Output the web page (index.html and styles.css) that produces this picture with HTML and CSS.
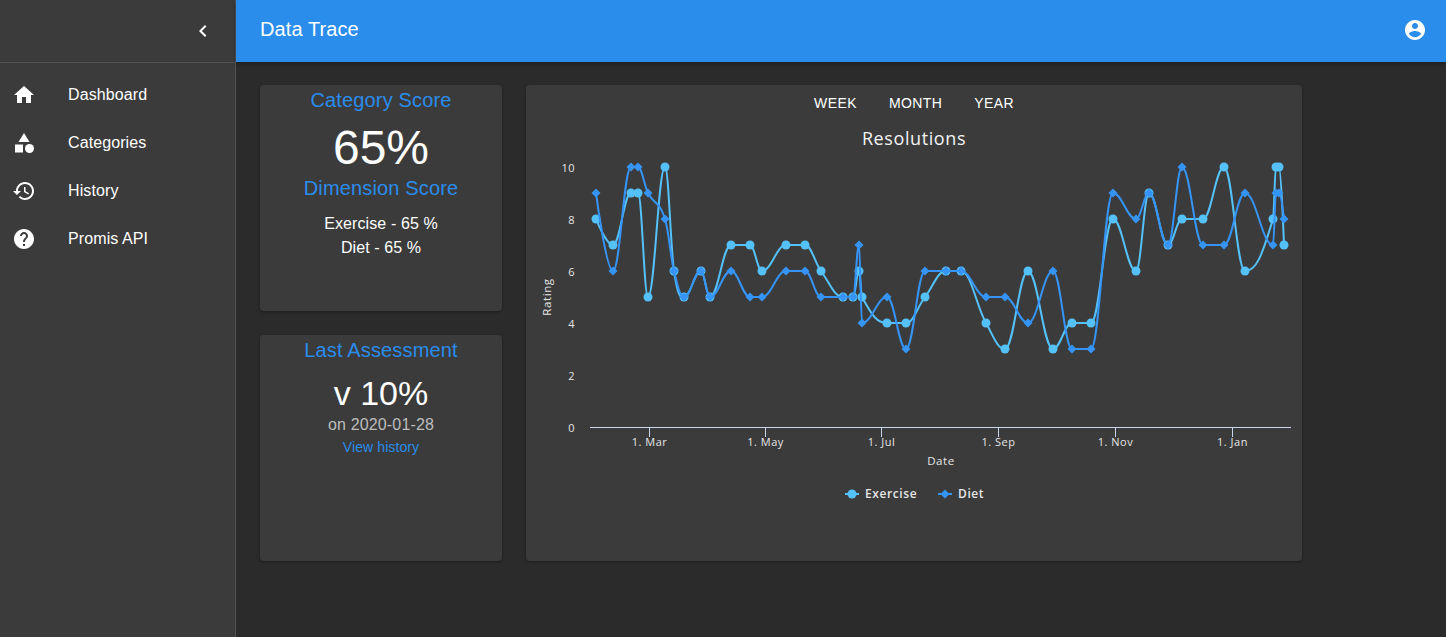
FILE: index.html
```html
<!DOCTYPE html>
<html lang="en">

<head>
    <meta charset="UTF-8">
    <meta name="viewport" content="width=device-width, initial-scale=1.0">
    <title>Data Trace</title>
    <link rel="stylesheet" href="styles.css">
</head>

<body>
    <aside class="drawer">
        <div class="drawer-head">
            <svg class="icon" viewBox="0 0 24 24"><path d="M15.41 7.41L14 6l-6 6 6 6 1.41-1.41L10.83 12z"/></svg>
        </div>
        <nav class="nav">
            <a class="nav-item">
                <svg class="icon" viewBox="0 0 24 24"><path d="M10 20v-6h4v6h5v-8h3L12 3 2 12h3v8z"/></svg>
                <span>Dashboard</span>
            </a>
            <a class="nav-item">
                <svg class="icon" viewBox="0 0 24 24"><path d="M12 2l-5.5 9h11z"/><circle cx="17.5" cy="17.5" r="4.5"/><path d="M3 13.5h8v8H3z"/></svg>
                <span>Categories</span>
            </a>
            <a class="nav-item">
                <svg class="icon" viewBox="0 0 24 24"><path d="M13 3c-4.97 0-9 4.03-9 9H1l3.89 3.89.07.14L9 12H6c0-3.87 3.13-7 7-7s7 3.13 7 7-3.13 7-7 7c-1.93 0-3.68-.79-4.94-2.06l-1.42 1.42C8.27 19.99 10.51 21 13 21c4.97 0 9-4.03 9-9s-4.03-9-9-9zm-1 5v5l4.28 2.54.72-1.21-3.5-2.08V8H12z"/></svg>
                <span>History</span>
            </a>
            <a class="nav-item">
                <svg class="icon" viewBox="0 0 24 24"><path d="M12 2C6.48 2 2 6.48 2 12s4.48 10 10 10 10-4.48 10-10S17.52 2 12 2zm1 17h-2v-2h2v2zm2.07-7.75l-.9.92C13.45 12.9 13 13.5 13 15h-2v-.5c0-1.1.45-2.1 1.17-2.83l1.24-1.26c.37-.36.59-.86.59-1.41 0-1.1-.9-2-2-2s-2 .9-2 2H8c0-2.21 1.79-4 4-4s4 1.79 4 4c0 .88-.36 1.68-.93 2.25z"/></svg>
                <span>Promis API</span>
            </a>
        </nav>
    </aside>

    <div class="page">
        <header class="topbar">
            <h1>Data Trace</h1>
            <svg class="icon" viewBox="0 0 24 24"><path d="M12 2C6.48 2 2 6.48 2 12s4.48 10 10 10 10-4.48 10-10S17.52 2 12 2zm0 3c1.66 0 3 1.34 3 3s-1.34 3-3 3-3-1.34-3-3 1.34-3 3-3zm0 14.2c-2.5 0-4.71-1.28-6-3.22.03-1.99 4-3.08 6-3.08 1.99 0 5.97 1.09 6 3.08-1.29 1.94-3.5 3.22-6 3.22z"/></svg>
        </header>

        <main class="content">
            <div class="side-cards">
                <section class="card score-card">
                    <h2>Category Score</h2>
                    <div class="big-number">65%</div>
                    <h2>Dimension Score</h2>
                    <ul class="dimensions">
                        <li>Exercise - 65 %</li>
                        <li>Diet - 65 %</li>
                    </ul>
                </section>
                <section class="card score-card">
                    <h2>Last Assessment</h2>
                    <div class="mid-number">v 10%</div>
                    <div class="date">on 2020-01-28</div>
                    <a class="history-link">View history</a>
                </section>
            </div>

            <section class="card chart-card">
                <div class="ranges">
                    <button type="button">Week</button>
                    <button type="button">Month</button>
                    <button type="button">Year</button>
                </div>
                <svg id="chart" class="chart" viewBox="526 121 776 440"></svg>
            </section>
        </main>
    </div>

    <script src="chart.js"></script>
</body>

</html>
```

FILE: styles.css
```css
* {
    box-sizing: border-box;
}

html,
body {
    height: 100%;
}

body {
    margin: 0;
    display: flex;
    overflow: hidden;
    font-family: "Liberation Sans", Arial, sans-serif;
    color: #fff;
    background-color: #2b2b2b;
}

.icon {
    width: 24px;
    height: 24px;
    flex: none;
    fill: #fff;
}

/* Menu lateral */
.drawer {
    width: 236px;
    flex: none;
    background-color: #3b3b3b;
    border-right: 1px solid #525252;
}

.drawer-head {
    height: 63px;
    padding: 0 20px 1px 0;
    display: flex;
    align-items: center;
    justify-content: flex-end;
    border-bottom: 1px solid #525252;
}

.nav {
    padding-top: 8px;
}

.nav-item {
    height: 48px;
    padding-left: 12px;
    display: flex;
    align-items: center;
    gap: 32px;
    font-size: 16px;
    letter-spacing: 0.1px;
}

/* Barra superior */
.page {
    flex: 1;
    min-width: 0;
}

.topbar {
    height: 62px;
    padding: 0 19px 2px 24px;
    display: flex;
    align-items: center;
    justify-content: space-between;
    background-color: #2a8ceb;
    box-shadow: 0 2px 4px rgba(0, 0, 0, 0.3);
}

.topbar h1 {
    margin: 0 0 2px;
    font-size: 20px;
    font-weight: 400;
    letter-spacing: 0.1px;
}

.content {
    padding: 23px 24px;
    display: flex;
    gap: 24px;
}

.side-cards {
    width: 242px;
    display: flex;
    flex-direction: column;
    gap: 24px;
}

.card {
    background-color: #3b3b3b;
    border-radius: 4px;
    box-shadow: 0 1px 3px rgba(0, 0, 0, 0.35);
}

.score-card {
    height: 226px;
    text-align: center;
}

.score-card h2 {
    margin: 0;
    font-size: 20px;
    line-height: 31px;
    font-weight: 400;
    letter-spacing: 0.15px;
    color: #2a8ceb;
}

.big-number {
    margin-top: 7px;
    font-size: 48px;
    line-height: 50px;
}

.dimensions {
    margin: 8px 0 0;
    padding: 0;
    list-style: none;
    font-size: 16px;
    line-height: 24px;
    letter-spacing: 0.1px;
}

.mid-number {
    margin-top: 5px;
    font-size: 34px;
    line-height: 44px;
}

.date {
    margin-top: 1px;
    font-size: 16px;
    line-height: 18px;
    letter-spacing: 0.15px;
    color: #bdbdbd;
}

.history-link {
    display: block;
    margin-top: 4px;
    font-size: 14px;
    line-height: 18px;
    letter-spacing: 0.1px;
    color: #2a8ceb;
}

.chart-card {
    width: 776px;
    height: 476px;
}

.ranges {
    height: 36px;
    display: flex;
    justify-content: center;
}

.ranges button {
    padding: 0 16px;
    font: 14px "Liberation Sans", Arial, sans-serif;
    letter-spacing: 0.4px;
    text-transform: uppercase;
    color: #fff;
    background: none;
    border: none;
    cursor: pointer;
}

.chart {
    display: block;
    width: 776px;
    height: 440px;
    font-family: "Open Sans", "DejaVu Sans", sans-serif;
}

.chart-title {
    font-size: 18px;
    letter-spacing: 0.6px;
    fill: #f2f2f2;
    text-anchor: middle;
}

.axis-label {
    font-size: 11px;
    letter-spacing: 0.5px;
    fill: #e6e6e6;
}

.axis-title {
    font-size: 11.5px;
    letter-spacing: 0.6px;
    fill: #e6e6e6;
    text-anchor: middle;
}

.legend-label {
    font-size: 12px;
    font-weight: 600;
    letter-spacing: 0.6px;
    fill: #e6e6e6;
}

.axis-line {
    stroke: #ccd6eb;
    stroke-width: 1;
}

.series-line {
    fill: none;
    stroke-width: 2;
}
```

FILE: chart.js
```js
var SVG_NS = 'http://www.w3.org/2000/svg';
var chart = document.getElementById('chart');

var EXERCISE_COLOR = '#55c1f9';
var DIET_COLOR = '#3594f5';

// x em pixels, depois os valores de cada serie
var xs = [596, 613, 631, 638, 648, 665, 674, 684, 701, 710, 731, 750, 762, 786, 805, 821, 843, 853, 859, 862, 887, 906,
    925, 946, 961, 986, 1005, 1028, 1053, 1072, 1091, 1113, 1136, 1149, 1168, 1182, 1203, 1224, 1245, 1273, 1276, 1279, 1284];
var exercise = [8, 7, 9, 9, 5, 10, 6, 5, 6, 5, 7, 7, 6, 7, 7, 6, 5, 5, 6, 5, 4, 4,
    5, 6, 6, 4, 3, 6, 3, 4, 4, 8, 6, 9, 7, 8, 8, 10, 6, 8, 10, 10, 7];
var diet = [9, 6, 10, 10, 9, 8, 6, 5, 6, 5, 6, 5, 5, 6, 6, 5, 5, 5, 7, 4, 5, 3,
    6, 6, 6, 5, 5, 4, 6, 3, 3, 9, 8, 9, 7, 10, 7, 7, 9, 7, 9, 9, 8];

function yOf(value) {
    return 427 - value * 26;
}

function add(name, attrs, text) {
    var el = document.createElementNS(SVG_NS, name);
    for (var key in attrs) {
        el.setAttribute(key, attrs[key]);
    }
    if (text) {
        el.textContent = text;
    }
    chart.appendChild(el);
    return el;
}

// Curva suavizada, mesma ideia do spline do Highcharts
function controls(points, i) {
    var p = points[i], last = points[i - 1], next = points[i + 1];
    if (!last || !next) {
        return { lx: p.x, ly: p.y, rx: p.x, ry: p.y };
    }
    var lx = (1.5 * p.x + last.x) / 2.5, ly = (1.5 * p.y + last.y) / 2.5;
    var rx = (1.5 * p.x + next.x) / 2.5, ry = (1.5 * p.y + next.y) / 2.5;
    var correction = ((ry - ly) * (rx - p.x)) / (rx - lx) + p.y - ry;
    ly += correction;
    ry += correction;
    if (ly > last.y && ly > p.y) {
        ly = Math.max(last.y, p.y);
        ry = 2 * p.y - ly;
    } else if (ly < last.y && ly < p.y) {
        ly = Math.min(last.y, p.y);
        ry = 2 * p.y - ly;
    }
    if (ry > next.y && ry > p.y) {
        ry = Math.max(next.y, p.y);
        ly = 2 * p.y - ry;
    } else if (ry < next.y && ry < p.y) {
        ry = Math.min(next.y, p.y);
        ly = 2 * p.y - ry;
    }
    return { lx: lx, ly: ly, rx: rx, ry: ry };
}

function splinePath(values) {
    var points = values.map(function (v, i) {
        return { x: xs[i], y: yOf(v) };
    });
    var d = 'M' + points[0].x + ' ' + points[0].y;
    for (var i = 1; i < points.length; i++) {
        var a = controls(points, i - 1), b = controls(points, i);
        d += 'C' + [a.rx, a.ry, b.lx, b.ly, points[i].x, points[i].y].join(' ');
    }
    return d;
}

function diamond(x, y, r, color) {
    add('path', {
        d: 'M' + x + ' ' + (y - r) + 'L' + (x + r) + ' ' + y + 'L' + x + ' ' + (y + r) + 'L' + (x - r) + ' ' + y + 'Z',
        fill: color
    });
}

function drawSeries(values, color, marker) {
    add('path', { 'class': 'series-line', d: splinePath(values), stroke: color });
    values.forEach(function (v, i) {
        marker(xs[i], yOf(v));
    });
}

function drawExercise(x, y) {
    add('circle', { cx: x, cy: y, r: 4.5, fill: EXERCISE_COLOR });
}

function drawDiet(x, y) {
    diamond(x, y, 4.5, DIET_COLOR);
}

add('text', { 'class': 'chart-title', x: 914, y: 145 }, 'Resolutions');

[0, 2, 4, 6, 8, 10].forEach(function (v) {
    add('text', { 'class': 'axis-label', x: 575, y: yOf(v) + 5, 'text-anchor': 'end' }, String(v));
});

add('line', { 'class': 'axis-line', x1: 590, y1: 427.5, x2: 1291, y2: 427.5 });

[[649.5, '1. Mar'], [765.5, '1. May'], [881.5, '1. Jul'], [998.5, '1. Sep'], [1115.5, '1. Nov'], [1232.5, '1. Jan']].forEach(function (t) {
    add('line', { 'class': 'axis-line', x1: t[0], y1: 427, x2: t[0], y2: 437 });
    add('text', { 'class': 'axis-label', x: t[0], y: 446, 'text-anchor': 'middle' }, t[1]);
});

add('text', { 'class': 'axis-title', x: 941, y: 465 }, 'Date');
add('text', { 'class': 'axis-title', x: 551, y: 297, transform: 'rotate(-90 551 297)' }, 'Rating');

drawSeries(exercise, EXERCISE_COLOR, drawExercise);
drawSeries(diet, DIET_COLOR, drawDiet);

// Legenda
add('path', { 'class': 'series-line', d: 'M845 494H859', stroke: EXERCISE_COLOR });
drawExercise(852, 494);
add('text', { 'class': 'legend-label', x: 865, y: 498 }, 'Exercise');
add('path', { 'class': 'series-line', d: 'M938 494H952', stroke: DIET_COLOR });
drawDiet(945, 494);
add('text', { 'class': 'legend-label', x: 958, y: 498 }, 'Diet');
```
